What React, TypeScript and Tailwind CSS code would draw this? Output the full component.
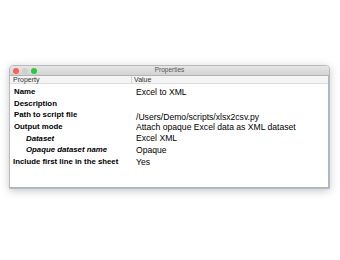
const rows = [
  { name: "Name", value: "Excel to XML" },
  { name: "Description", value: "" },
  { name: "Path to script file", value: "/Users/Demo/scripts/xlsx2csv.py", low: true },
  { name: "Output mode", value: "Attach opaque Excel data as XML dataset" },
  { name: "Dataset", value: "Excel XML", sub: true },
  { name: "Opaque dataset name", value: "Opaque", sub: true },
  { name: "Include first line in the sheet", value: "Yes", tight: true },
];

export default function App() {
  return (
    <div className="w-[340px] h-[260px] bg-white pt-[65px] pl-[9px] font-['Liberation_Sans',Arial,sans-serif]">
      <div className="w-[321px] h-[124px] flex flex-col border border-[#b9b9b9] rounded-t-[4px] bg-white shadow-[0_2px_8px_rgba(0,0,0,0.22)] overflow-hidden">
        <div className="relative h-[10px] flex items-center justify-center bg-gradient-to-b from-[#e6e6e6] to-[#d2d2d2] border-b border-[#b3b3b3]">
          <div className="absolute left-[3px] top-[1.5px] flex gap-[3px]">
            <span className="w-[6px] h-[6px] rounded-full bg-[#fc5f57]" />
            <span className="w-[6px] h-[6px] rounded-full bg-[#cfcfcf]" />
            <span className="w-[6px] h-[6px] rounded-full bg-[#2bc840]" />
          </div>
          <span className="text-[6.5px] leading-none text-[#555]">Properties</span>
        </div>
        <div className="flex-1 flex flex-col border-r border-b border-[#a9b7cb]">
          <div className="h-[8px] flex items-center bg-[#f4f4f4] border-b border-[#dedede] text-[7px] leading-none text-[#333]">
            <div className="w-[122px] pl-[3px] border-r border-[#d6d6d6] h-full flex items-center">Property</div>
            <div className="pl-[2px]">Value</div>
          </div>
          <div className="pt-[2px]">
            {rows.map((r) => (
              <div key={r.name} className="h-[11.7px] flex items-center leading-none text-black">
                <div
                  className={`w-[122px] text-[7.8px] font-bold whitespace-nowrap ${r.sub ? "pl-[16px] italic" : r.tight ? "pl-[3px]" : "pl-[4px]"}`}
                >
                  {r.name}
                </div>
                <div className={`pl-[4px] text-[8.6px] whitespace-nowrap ${r.low ? "pt-[5px]" : ""}`}>{r.value}</div>
              </div>
            ))}
          </div>
        </div>
      </div>
    </div>
  );
}
